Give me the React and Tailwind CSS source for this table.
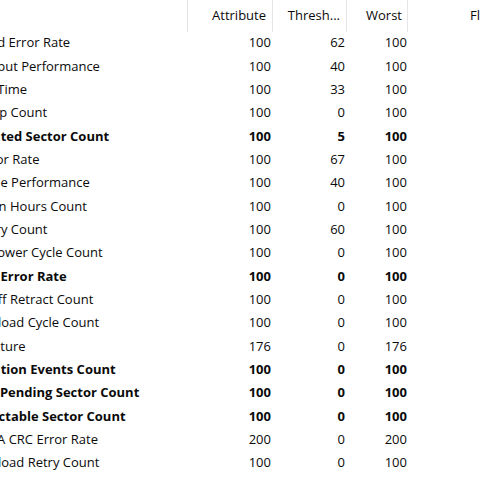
import React from 'react';

const rows = [
  { name: 'Raw Read Error Rate', attr: 100, thresh: 62, worst: 100 },
  { name: 'Throughput Performance', attr: 100, thresh: 40, worst: 100 },
  { name: 'Spin-Up Time', attr: 100, thresh: 33, worst: 100 },
  { name: 'Start/Stop Count', attr: 100, thresh: 0, worst: 100 },
  { name: 'Reallocated Sector Count', attr: 100, thresh: 5, worst: 100, bold: true },
  { name: 'Seek Error Rate', attr: 100, thresh: 67, worst: 100 },
  { name: 'Seek Time Performance', attr: 100, thresh: 40, worst: 100 },
  { name: 'Power-On Hours Count', attr: 100, thresh: 0, worst: 100 },
  { name: 'Spin Retry Count', attr: 100, thresh: 60, worst: 100 },
  { name: 'Device Power Cycle Count', attr: 100, thresh: 0, worst: 100 },
  { name: 'G-Sense Error Rate', attr: 100, thresh: 0, worst: 100, bold: true },
  { name: 'Power Off Retract Count', attr: 100, thresh: 0, worst: 100 },
  { name: 'Load/Unload Cycle Count', attr: 100, thresh: 0, worst: 100 },
  { name: 'Temperature', attr: 176, thresh: 0, worst: 176 },
  { name: 'Reallocation Events Count', attr: 100, thresh: 0, worst: 100, bold: true },
  { name: 'Current Pending Sector Count', attr: 100, thresh: 0, worst: 100, bold: true },
  { name: 'Uncorrectable Sector Count', attr: 100, thresh: 0, worst: 100, bold: true },
  { name: 'UltraDMA CRC Error Rate', attr: 200, thresh: 0, worst: 200 },
  { name: 'Load/Unload Retry Count', attr: 100, thresh: 0, worst: 100 },
];

export default function App() {
  return (
    <div className="w-[480px] h-[480px] overflow-hidden bg-white text-[13px] text-[#0a0a0a] font-['Open_Sans',sans-serif]">
      {/* list is scrolled sideways, so the name column starts left of the window */}
      <div className="ml-[-60px] w-[620px]">
        <div className="flex h-[31.5px] items-center">
          <div className="w-[248px] h-full border-r border-[#e5e5e5]" />
          <div className="w-[85px] h-full border-r border-[#e5e5e5] flex items-center justify-end pr-[6px]">Attribute</div>
          <div className="w-[74px] h-full border-r border-[#e5e5e5] flex items-center justify-end pr-[6px]">Thresh...</div>
          <div className="w-[61px] h-full border-r border-[#e5e5e5] flex items-center justify-end pr-[5px]">Worst</div>
          <div className="flex-1 h-full flex items-center pl-[62px]">Flags</div>
        </div>
        {rows.map((r) => (
          <div key={r.name} className={`flex h-[23.33px] items-center whitespace-nowrap ${r.bold ? 'font-bold' : ''}`}>
            <div className="w-[248px] pl-[6px] overflow-hidden">{r.name}</div>
            <div className="w-[85px] text-right pr-[2px]">{r.attr}</div>
            <div className="w-[74px] text-right pr-[2px]">{r.thresh}</div>
            <div className="w-[61px] text-right pr-[1px]">{r.worst}</div>
          </div>
        ))}
      </div>
    </div>
  );
}
